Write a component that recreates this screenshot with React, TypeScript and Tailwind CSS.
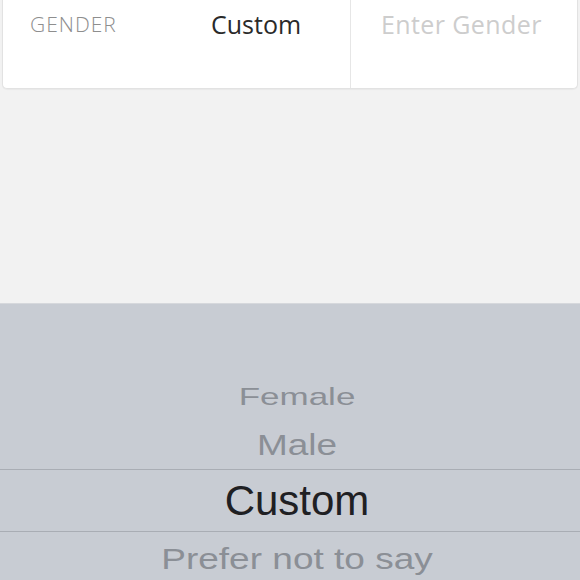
export default function App() {
  return (
    <div className="w-[580px] h-[580px] bg-[#f2f2f2] flex flex-col overflow-hidden font-['Open_Sans',sans-serif]">
      {/* Form card */}
      <div className="mx-[2px] -mt-[4px] h-[93px] bg-white rounded-b-[5px] border border-t-0 border-[#e2e2e2] shadow-[0_1px_1px_rgba(0,0,0,0.04)] flex">
        <div className="w-[348px] flex items-start pt-[13px] border-r border-[#e6e6e6]">
          <span className="w-[208px] pl-[27px] text-[21px] leading-[30px] text-[#8e8e8e] font-light tracking-[1px]">GENDER</span>
          <span className="text-[25px] leading-[30px] text-[#2a2a2a]">Custom</span>
        </div>
        <div className="flex-1 pt-[13px] pl-[30px]">
          <span className="text-[25px] leading-[30px] text-[#cdcdcd] tracking-[0.4px]">Enter Gender</span>
        </div>
      </div>

      <div className="flex-1" />

      {/* Picker wheel */}
      <div className="h-[277px] bg-[#c8ccd3] border-t border-[#d6d8dc] flex flex-col justify-end overflow-hidden pl-[14px] font-['Liberation_Sans',sans-serif]">
        <div className="h-[48px] flex items-center justify-center">
          <span className="text-[35px] text-[#8b8f96] scale-y-[0.68] leading-none">Female</span>
        </div>
        <div className="h-[49px] flex items-center justify-center">
          <span className="text-[37px] text-[#8b8f96] scale-y-[0.82] leading-none">Male</span>
        </div>
        <div className="h-[63px] -ml-[14px] pl-[14px] border-y border-[#a9adb4] flex items-center justify-center">
          <span className="text-[42px] text-[#1f2023] leading-none">Custom</span>
        </div>
        <div className="h-[52px] shrink-0 flex items-center justify-center -mb-[4px]">
          <span className="text-[37px] text-[#8b8f96] scale-y-[0.82] leading-none">Prefer not to say</span>
        </div>
      </div>
    </div>
  );
}
